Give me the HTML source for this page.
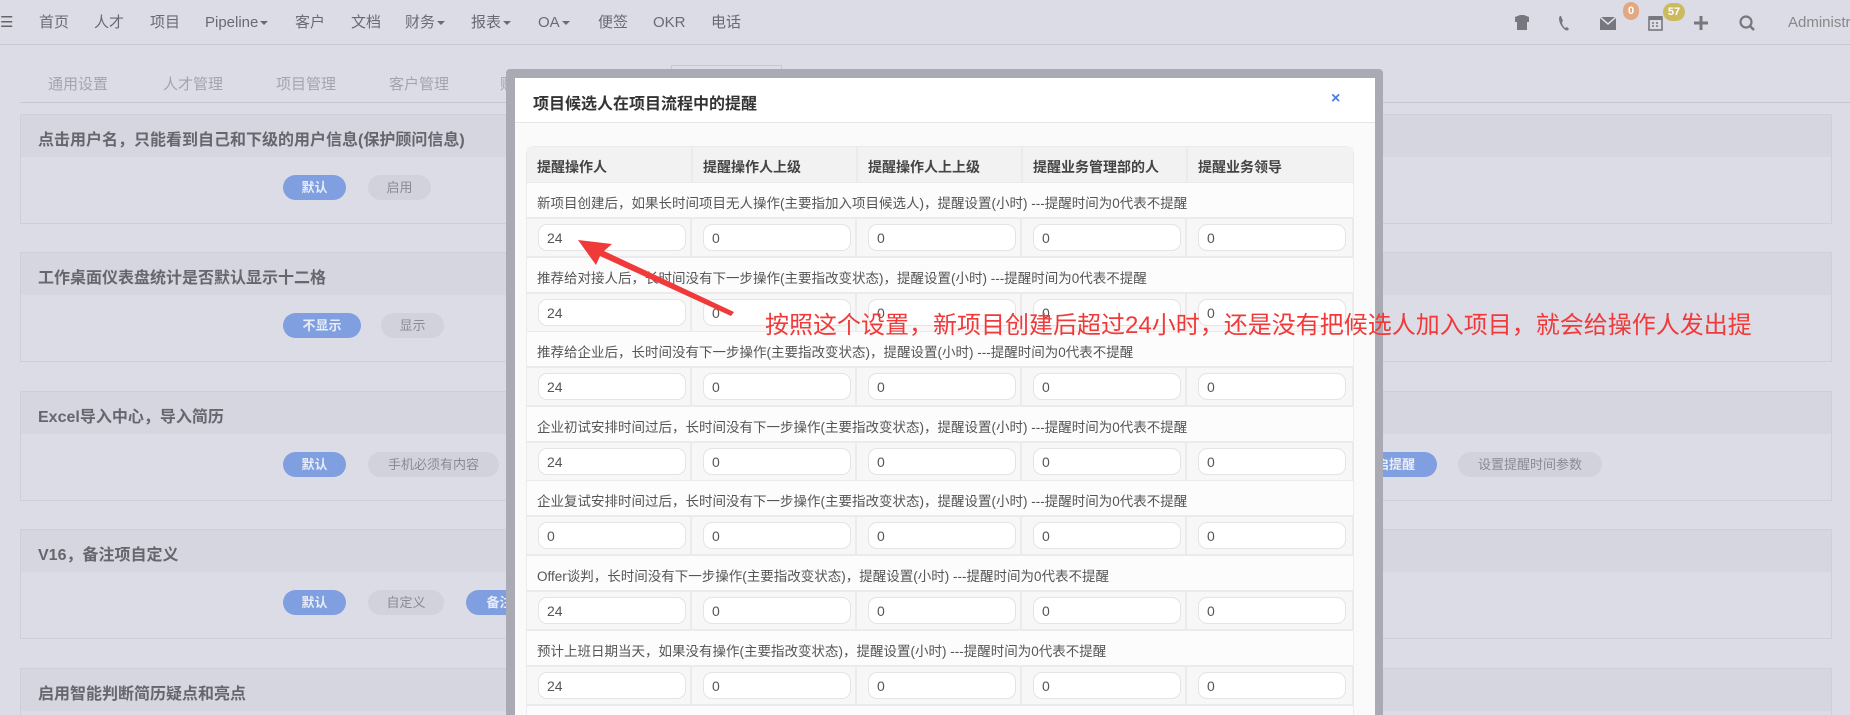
<!DOCTYPE html>
<html><head><meta charset="utf-8">
<style>
*{margin:0;padding:0;box-sizing:border-box}
html,body{width:1850px;height:715px;overflow:hidden}
body{background:#dcdce6;font-family:"Liberation Sans","Noto Sans CJK SC",sans-serif;color:#555}
#wrap{position:relative;width:1850px;height:715px;overflow:hidden}
.abs{position:absolute}
.nav{left:0;top:0;width:1850px;height:45px;border-bottom:1px solid #c8c8d2;background:#dcdce6}
.nav span.t{position:absolute;top:0;line-height:45px;font-size:15px;color:#6a6a74}
.caret{display:inline-block;border-left:4px solid transparent;border-right:4px solid transparent;border-top:4px solid #6a6a74;vertical-align:middle;margin-left:2px}
.tab{top:73px;font-size:15px;color:#a4a4b0}
.panel{left:20px;width:1812px;height:110px;border:1px solid #cfcfd9}
.panel .hd{height:42px;background:#d6d6e0;font-size:16px;font-weight:bold;color:#66666f;padding:11px 0 0 17px}
.btn{position:absolute;height:25px;border-radius:13px;font-size:13px;text-align:center;line-height:25px}
.b1{background:#7f9fe0;color:#e8ecf8;font-weight:bold}
.b2{background:#d2d2dc;color:#8a8a94}
.frame{left:506px;top:69px;width:877px;height:646px;background:#aaaab4;border-radius:4px 4px 0 0}
.modal{left:515px;top:78px;width:860px;height:637px;background:#fafafa}
.mh{left:515px;top:78px;width:860px;height:45px;background:#fff;border-bottom:1px solid #e6e6e6}
.tbl{left:526px;top:146px;width:828px;height:569px;background:#ebebeb;border-radius:8px 8px 0 0}
.cell{position:absolute;font-size:14px;color:#444}
.th{background:#f2f2f2;font-weight:bold;color:#444;padding:10px 0 0 10px;height:35px}
.desc{background:#fcfcfc;font-size:13.5px;color:#555;padding:9px 0 0 10px;height:34px;width:826px;left:1px}
.inrow{background:#f7f7f7;height:37px}
.inp{position:absolute;width:148px;height:27px;background:#fff;border:1px solid #e4e4e4;border-radius:9px;font-size:14px;color:#555;padding:5px 0 0 8px}
</style></head><body><div id="wrap">
<div class="abs nav">
<span class="t" style="left:0;color:#666">&#9776;</span>
<span class="t" style="left:39px">首页</span><span class="t" style="left:94px">人才</span><span class="t" style="left:150px">项目</span>
<span class="t" style="left:205px">Pipeline<i class="caret"></i></span><span class="t" style="left:295px">客户</span><span class="t" style="left:351px">文档</span>
<span class="t" style="left:405px">财务<i class="caret"></i></span><span class="t" style="left:471px">报表<i class="caret"></i></span><span class="t" style="left:538px">OA<i class="caret"></i></span>
<span class="t" style="left:598px">便签</span><span class="t" style="left:653px">OKR</span><span class="t" style="left:711px">电话</span>
<svg class="abs" style="left:1500px;top:0" width="200" height="45">
<path d="M15 17 L20 15 L24 15 L29 17 L29 22 L27 22 L27 30 L17 30 L17 22 L15 22Z" fill="#77777f"/>
<path d="M60 16 C58 18 59 24 64 29 C66 31 68 31 69 29 L67 27 L65 28 C63 26 62 24 62 22 L63 21 L61 16Z" fill="#77777f"/>
<path d="M100 17 H116 V30 H100Z" fill="#77777f"/><path d="M100 17 L108 24 L116 17" stroke="#dcdce6" stroke-width="1.5" fill="none"/>
<rect x="149" y="17" width="13" height="13" fill="none" stroke="#77777f" stroke-width="1.6"/><rect x="149" y="16" width="13" height="4" fill="#77777f"/>
<path d="M152 23h2M156 23h2M152 26h2M156 26h2" stroke="#77777f" stroke-width="1.4"/>
</svg>
<span class="abs" style="left:1623px;top:2px;width:16px;height:18px;border-radius:9px;background:#e2a882;color:#fff;font-size:11px;text-align:center;line-height:18px;font-weight:bold">0</span>
<span class="abs" style="left:1663px;top:3px;width:22px;height:18px;border-radius:9px;background:#ccbb5e;color:#fff;font-size:11px;text-align:center;line-height:18px;font-weight:bold">57</span>
<svg class="abs" style="left:1690px;top:0" width="80" height="45">
<path d="M11 16 V30 M4 23 H18" stroke="#77777f" stroke-width="3"/>
<circle cx="56" cy="22" r="5.5" fill="none" stroke="#77777f" stroke-width="2.2"/><path d="M60 26 L64 30" stroke="#77777f" stroke-width="2.5"/>
</svg>
<span class="t" style="left:1788px;color:#888">Administra</span>
</div>
<span class="abs tab" style="left:48px">通用设置</span><span class="abs tab" style="left:163px">人才管理</span>
<span class="abs tab" style="left:276px">项目管理</span><span class="abs tab" style="left:389px">客户管理</span>
<span class="abs tab" style="left:500px">财务设置</span>
<div class="abs" style="left:671px;top:65px;width:111px;height:38px;border:1px solid #c8c8d2;border-bottom:none"></div>
<div class="abs" style="left:20px;top:102px;width:1830px;height:1px;background:#c8c8d2"></div>

<div class="abs panel" style="top:114px"><div class="hd">点击用户名，只能看到自己和下级的用户信息(保护顾问信息)</div>
<div class="btn b1" style="left:262px;top:60px;width:63px">默认</div><div class="btn b2" style="left:347px;top:60px;width:63px">启用</div></div>
<div class="abs panel" style="top:252px"><div class="hd">工作桌面仪表盘统计是否默认显示十二格</div>
<div class="btn b1" style="left:262px;top:60px;width:78px">不显示</div><div class="btn b2" style="left:360px;top:60px;width:63px">显示</div></div>
<div class="abs panel" style="top:391px"><div class="hd">Excel导入中心，导入简历</div>
<div class="btn b1" style="left:262px;top:60px;width:63px">默认</div><div class="btn b2" style="left:347px;top:60px;width:131px">手机必须有内容</div>
<div class="btn b1" style="left:1320px;top:60px;width:96px">开启提醒</div><div class="btn b2" style="left:1437px;top:60px;width:144px">设置提醒时间参数</div></div>
<div class="abs panel" style="top:529px"><div class="hd">V16，备注项自定义</div>
<div class="btn b1" style="left:262px;top:60px;width:63px">默认</div><div class="btn b2" style="left:347px;top:60px;width:76px">自定义</div><div class="btn b1" style="left:445px;top:60px;width:80px">备注类</div></div>
<div class="abs panel" style="top:668px;height:47px;border-bottom:none"><div class="hd">启用智能判断简历疑点和亮点</div></div>

<div class="abs frame"></div>
<div class="abs modal"></div>
<div class="abs mh"><div style="position:absolute;left:18px;top:12px;font-size:16px;font-weight:bold;color:#333">项目候选人在项目流程中的提醒</div>
<div style="position:absolute;left:816px;top:12px;font-size:16px;font-weight:bold;color:#4a7fe0">×</div></div>

<div class="abs tbl">
<div class="cell th" style="left:1px;top:1px;width:164px">提醒操作人</div>
<div class="cell th" style="left:167px;top:1px;width:163px">提醒操作人上级</div>
<div class="cell th" style="left:332px;top:1px;width:163px">提醒操作人上上级</div>
<div class="cell th" style="left:497px;top:1px;width:163px">提醒业务管理部的人</div>
<div class="cell th" style="left:662px;top:1px;width:165px">提醒业务领导</div>
</div>
<div id="rows"></div>
<script>
var d=["新项目创建后，如果长时间项目无人操作(主要指加入项目候选人)，提醒设置(小时) ---提醒时间为0代表不提醒",
"推荐给对接人后，长时间没有下一步操作(主要指改变状态)，提醒设置(小时) ---提醒时间为0代表不提醒",
"推荐给企业后，长时间没有下一步操作(主要指改变状态)，提醒设置(小时) ---提醒时间为0代表不提醒",
"企业初试安排时间过后，长时间没有下一步操作(主要指改变状态)，提醒设置(小时) ---提醒时间为0代表不提醒",
"企业复试安排时间过后，长时间没有下一步操作(主要指改变状态)，提醒设置(小时) ---提醒时间为0代表不提醒",
"Offer谈判，长时间没有下一步操作(主要指改变状态)，提醒设置(小时) ---提醒时间为0代表不提醒",
"预计上班日期当天，如果没有操作(主要指改变状态)，提醒设置(小时) ---提醒时间为0代表不提醒"];
var f=["24","24","24","24","0","24","24"];var h="";
for(var i=0;i<7;i++){var t=Math.round(183+74.6*i);
h+='<div class="abs cell desc" style="left:527px;top:'+t+'px">'+d[i]+'</div>';
for(var c=0;c<5;c++){var L=527+c*165;
h+='<div class="abs inrow" style="left:'+L+'px;top:'+(t+36)+'px;width:'+(c==4?165:163)+'px"></div>';
h+='<div class="inp" style="left:'+(L+11)+'px;top:'+(t+41)+'px">'+(c==0?f[i]:"0")+'</div>';}}
h+='<div class="abs" style="left:527px;top:706px;width:826px;height:9px;background:#fcfcfc"></div>';
document.getElementById("rows").innerHTML=h;
</script>
<svg class="abs" style="left:0;top:0" width="1850" height="715">
<polygon points="578,240 612,244 604,251 734,312 731,316 600,256 596,265" fill="#f03a3a"/>
</svg>
<div class="abs" style="left:765px;top:311px;font-size:24px;color:#f03a3a;white-space:nowrap;line-height:30px">按照这个设置，新项目创建后超过24小时，还是没有把候选人加入项目，就会给操作人发出提</div>
</div></body></html>
